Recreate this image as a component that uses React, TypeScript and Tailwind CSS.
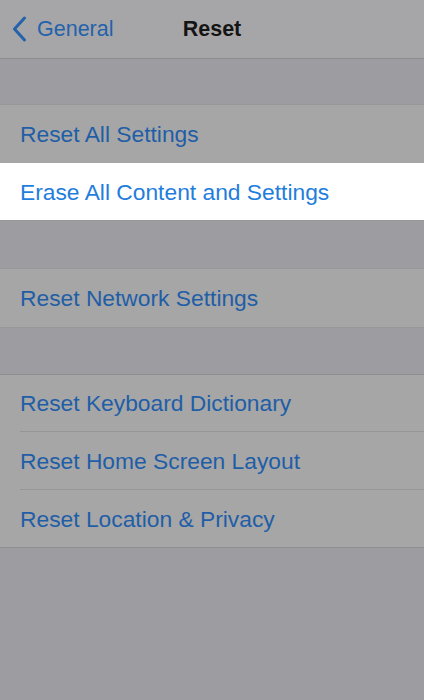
const font = { fontFamily: '"Liberation Sans", Arial, sans-serif' };

function Row({ label, white, divider }: { label: string; white?: boolean; divider?: boolean }) {
  return (
    <div className={`h-[57.5px] pl-5 ${white ? 'bg-white' : 'bg-[#a6a6a6]'}`}>
      <div
        className={`flex h-full items-center pt-px text-[22.8px] ${
          white ? 'text-[#1f7edc]' : 'text-[#1f5ea6]'
        } ${divider ? 'border-b border-[#969698]' : ''}`}
      >
        {label}
      </div>
    </div>
  );
}

export default function App() {
  return (
    <div className="min-h-[700px] w-[424px] bg-[#9c9ca1]" style={font}>
      {/* nav bar */}
      <header className="relative flex h-[59px] items-center border-b border-[#8c8c90] bg-[#a6a6a8]">
        <div className="flex items-center pl-3 text-[21.5px] text-[#2462ab]">
          <svg width="15" height="26" viewBox="0 0 15 26" className="mr-[10px]">
            <path d="M12.5 2 L2.5 13 L12.5 24" fill="none" stroke="#2462ab" strokeWidth="3" strokeLinecap="round" strokeLinejoin="round" />
          </svg>
          General
        </div>
        <div className="absolute left-1/2 -translate-x-1/2 text-[21.5px] font-bold text-[#141414]">Reset</div>
      </header>

      <div className="h-[45px]" />
      <section className="border-y border-[#979799]">
        <Row label="Reset All Settings" />
        <Row label="Erase All Content and Settings" white />
      </section>

      <div className="h-[47px]" />
      <section className="border-y border-[#979799]">
        <Row label="Reset Network Settings" />
      </section>

      <div className="h-[46px]" />
      <section className="border-y border-[#8f8f91]">
        <Row label="Reset Keyboard Dictionary" divider />
        <Row label="Reset Home Screen Layout" divider />
        <Row label="Reset Location & Privacy" />
      </section>
    </div>
  );
}
